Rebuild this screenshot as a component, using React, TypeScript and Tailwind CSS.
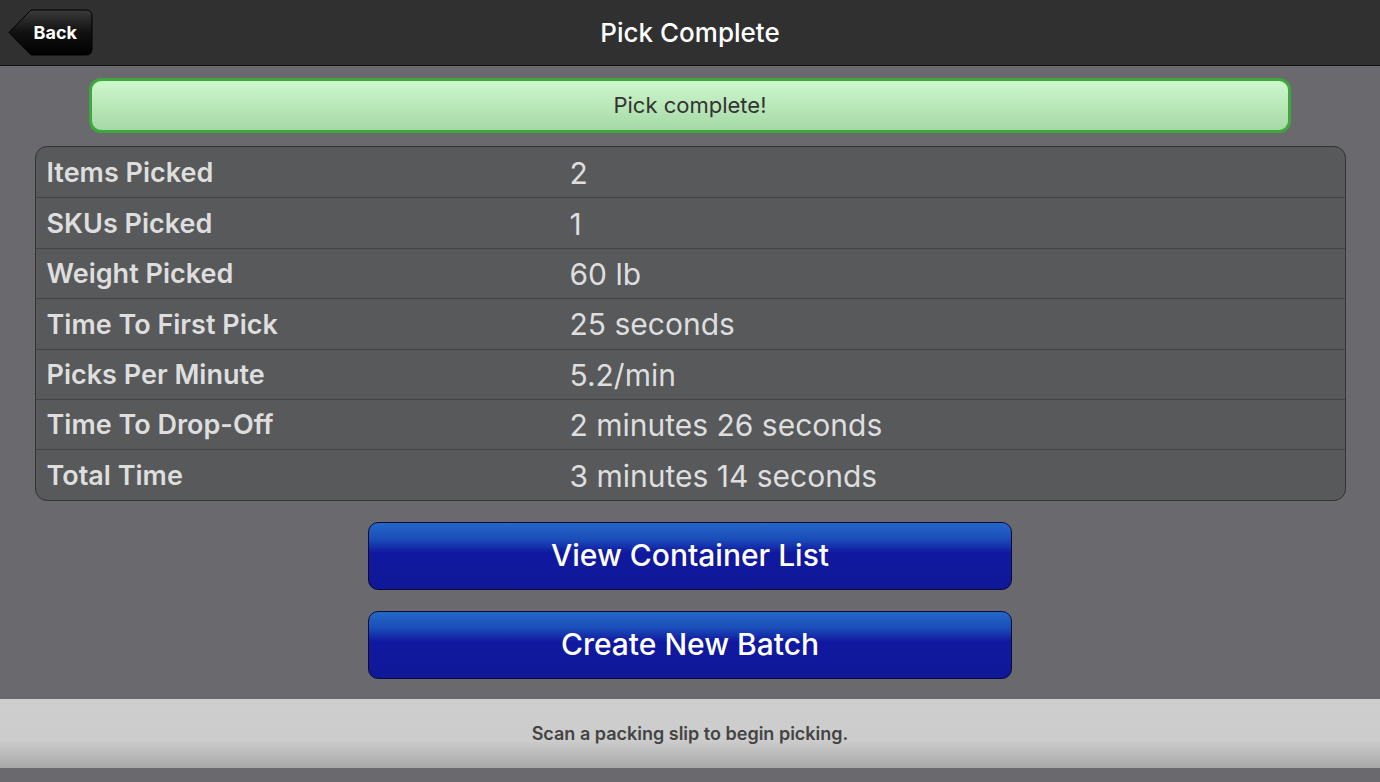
import React from "react";

const stats = [
  ["Items Picked", "2"],
  ["SKUs Picked", "1"],
  ["Weight Picked", "60 lb"],
  ["Time To First Pick", "25 seconds"],
  ["Picks Per Minute", "5.2/min"],
  ["Time To Drop-Off", "2 minutes 26 seconds"],
  ["Total Time", "3 minutes 14 seconds"],
];

function BackButton() {
  return (
    <button className="relative flex h-[47px] w-[85px] items-center justify-end pr-[16px] text-[18px] font-bold text-white">
      <svg className="absolute inset-0" width="85" height="47" viewBox="0 0 85 47">
        <defs>
          <linearGradient id="bk" x1="0" y1="0" x2="0" y2="1">
            <stop offset="0" stopColor="#3a3a3a" />
            <stop offset="0.5" stopColor="#111" />
            <stop offset="1" stopColor="#000" />
          </linearGradient>
        </defs>
        <path d="M1 23.5 L23 1 H78 Q84 1 84 7 V40 Q84 46 78 46 H23 Z" fill="url(#bk)" stroke="#000" strokeWidth="1" />
      </svg>
      <span className="relative">Back</span>
    </button>
  );
}

function BlueButton({ label }: { label: string }) {
  return (
    <button className="h-[68px] w-[644px] rounded-[10px] border border-[#0a0a3a] bg-[linear-gradient(to_bottom,#2468c8_0%,#1a4cb8_25%,#1018a0_45%,#101898_100%)] text-[30px] font-medium text-white">
      {label}
    </button>
  );
}

export default function App() {
  return (
    <div className="flex h-[782px] w-[1380px] flex-col bg-[linear-gradient(to_bottom,#5c5c5e,#6a6a6e_40px,#6a6a6e)] font-['Inter',sans-serif]">
      <header className="relative flex h-[66px] shrink-0 items-center justify-center border-b border-[#111] bg-[#303030]">
        <div className="absolute left-[8px] top-[9px]">
          <BackButton />
        </div>
        <h1 className="text-[26px] font-medium text-white">Pick Complete</h1>
      </header>

      <main className="flex flex-1 flex-col items-center">
        <div className="mt-[12px] flex h-[55px] w-[1202px] items-center justify-center rounded-[12px] border-[3px] border-[#3ea83e] bg-[linear-gradient(to_bottom,#cdf8cd,#a6d8a6)] text-[22px] text-[#333]">
          Pick complete!
        </div>

        <div className="mt-[13px] w-[1311px] overflow-hidden rounded-[12px] border border-[#333] bg-[#58595b]">
          {stats.map(([k, v], i) => (
            <div
              key={k}
              className={`flex h-[50.4px] items-center pt-[2px] ${i > 0 ? "border-t border-[#444]" : ""}`}
            >
              <div className="w-[534px] pl-[11px] text-[27px] font-semibold text-[#dedede]">{k}</div>
              <div className="text-[30px] text-[#dedede]">{v}</div>
            </div>
          ))}
        </div>

        <div className="mt-[21px] flex flex-col gap-[21px]">
          <BlueButton label="View Container List" />
          <BlueButton label="Create New Batch" />
        </div>
      </main>

      <footer className="mb-[14px] flex h-[69px] shrink-0 items-center justify-center bg-[linear-gradient(to_bottom,#cecece_0%,#cccccc_60%,#a8a8a8_100%)] text-[18px] font-semibold text-[#444]">
        Scan a packing slip to begin picking.
      </footer>
    </div>
  );
}
